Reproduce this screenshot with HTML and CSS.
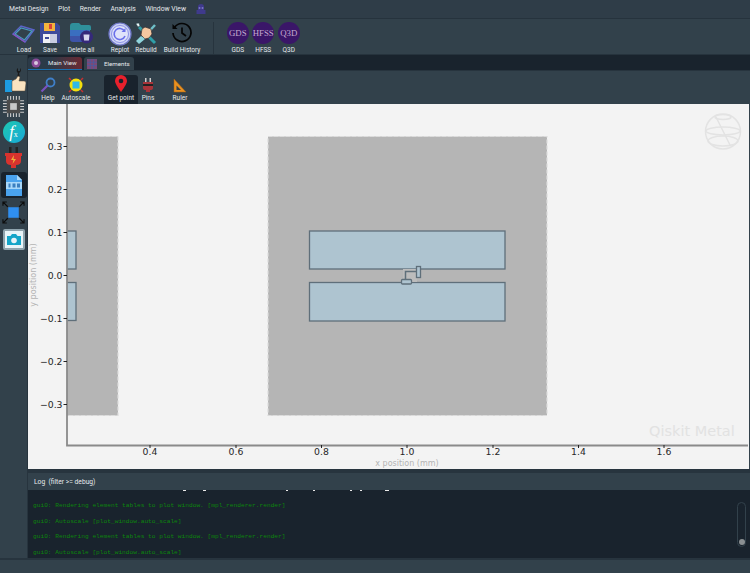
FILE: index.html
```html
<!DOCTYPE html>
<html lang="en">
<head>
<meta charset="utf-8">
<title>Qiskit Metal</title>
<link rel="stylesheet" href="styles.css">
</head>
<body>
<div class="app">
  <nav class="menubar">
    <span>Metal Design</span><span>Plot</span><span>Render</span><span>Analysis</span><span>Window View</span>
    <svg class="menu-icon" width="12" height="13" viewBox="0 0 12 13"><path d="M3 7V4a3 3 0 0 1 6 0v3h1.500v4H1.500V7z" fill="#3f3a8c"/><circle cx="4.500" cy="5" r="1" fill="#7a78c8"/><circle cx="7.500" cy="5" r="1" fill="#7a78c8"/></svg>
  </nav>

  <header class="toolbar">
    <div class="tool w-load">
      <svg class="load-icon" width="24" height="20" viewBox="0 0 24 20"><path d="M1 10 9 2l13 4-9 12z" fill="none" stroke="#5b64c8" stroke-width="1.400"/><path d="M3 10 9 4l11 3-7.500 9z" fill="none" stroke="#4a9ac0" stroke-width="1.200"/><path d="M1 10l12 8" stroke="#8a4fc0" stroke-width="1.400"/></svg>
      <span>Load</span>
    </div>
    <div class="tool w-save">
      <svg width="22" height="22" viewBox="0 0 22 22"><path d="M1 1h17l3 3v17H1z" fill="#3d4a9a"/><rect x="5" y="1" width="11" height="8" fill="#f4b43c"/><rect x="10" y="2" width="3" height="5" fill="#d9423a"/><rect x="4" y="12" width="14" height="9" fill="#f0f0f4"/><rect x="11" y="12" width="7" height="9" fill="#c8cce0"/><rect x="6" y="15" width="4" height="2" fill="#3d4a9a"/></svg>
      <span>Save</span>
    </div>
    <div class="tool w-delete">
      <svg width="25" height="22" viewBox="0 0 25 22"><path d="M1 4q0-3 3-3h6l2 2h8q2 0 2 2v3H1z" fill="#2f8f9a"/><path d="M1 8h20v6H1z" fill="#3a6fc0"/><path d="M1 14h15v6H4q-3 0-3-3z" fill="#3d54a8"/><circle cx="17.500" cy="15" r="6.500" fill="#35297a"/><path d="M14.500 12.500h6l-.6 6h-4.800z" fill="#d8d8ee"/></svg>
      <span>Delete all</span>
    </div>
    <div class="tool w-replot">
      <svg width="24" height="24" viewBox="0 0 24 24"><circle cx="12" cy="12" r="11" fill="#c9d0f4" stroke="#7078c8" stroke-width="1.200"/><circle cx="12" cy="12" r="8.500" fill="#dfe3fa" stroke="#8d92e6"/><path d="M16.500 9A5.600 5.600 0 1 0 17 14" fill="none" stroke="#6a70ea" stroke-width="1.600"/><path d="M17.500 6v4h-4z" fill="#6a70ea"/></svg>
      <span>Replot</span>
    </div>
    <div class="tool w-rebuild">
      <svg width="24" height="24" viewBox="0 0 24 24"><path d="M5 5l16 16" stroke="#2f9fa8" stroke-width="3"/><path d="M21 3 5 20" stroke="#6fbfc8" stroke-width="2.500"/><path d="M2 2l2 3 2-1-1-3q-3 0-3 1z" fill="#e8f4f6" stroke="#1a3a40" stroke-width=".5"/><path d="M8 7l3-2 6 2 1 5-3 4-4 1-4-4z" fill="#f5c7a0" stroke="#3a3030" stroke-width=".7"/><path d="M7 14l-5 5 3 3 6-5z" fill="#8fd4dc"/></svg>
      <span>Rebuild</span>
    </div>
    <div class="tool w-history">
      <svg width="22" height="22" viewBox="0 0 22 22"><path d="M3.500 5.500A9 9 0 1 1 2 11" fill="none" stroke="#050505" stroke-width="1.700"/><path d="M1.500 2v5h5z" fill="#050505"/><path d="M11 5.500V11l4 3" fill="none" stroke="#050505" stroke-width="1.700"/></svg>
      <span>Build History</span>
    </div>
    <div class="tool-sep"></div>
    <div class="tool w-round"><b class="badge">GDS</b><span>GDS</span></div>
    <div class="tool w-round"><b class="badge">HFSS</b><span>HFSS</span></div>
    <div class="tool w-round"><b class="badge">Q3D</b><span>Q3D</span></div>
  </header>

  <div class="body">
    <aside class="sidebar">
      <svg class="side-icon" width="24" height="25" viewBox="0 0 24 25"><path d="M16 1a3 3 0 0 0 0 5l-1 5h3l-1-5a3 3 0 0 0 1-5v3h-2z" fill="#1a1a1a"/><rect x="3" y="13" width="7" height="12" fill="#1d9be0"/><path d="M10 14l4-2 2-3 2 1-1 4h5q2 0 2 2l-1 8H10z" fill="#fbe3c0" stroke="#5a4a3a" stroke-width=".5"/></svg>
      <svg class="side-icon" width="23" height="23" viewBox="0 0 24 24"><g stroke="#c9c9c9" stroke-width="1.200"><path d="M6 1v22M9 1v22M12 1v22M15 1v22M18 1v22M1 6h22M1 9h22M1 12h22M1 15h22M1 18h22"/></g><rect x="5" y="5" width="14" height="14" fill="#4b4b4b"/><rect x="8.500" y="8.500" width="7" height="7" fill="#c8c8c8"/></svg>
      <div class="fx"><i>f</i><small>x</small></div>
      <svg class="side-icon plug" width="17" height="22" viewBox="0 0 17 22"><rect x="4" y="0" width="2.500" height="7" fill="#222"/><rect x="10.500" y="0" width="2.500" height="7" fill="#222"/><path d="M0 6h17v3h-1v5q0 4-5 4v3H6v-3q-5 0-5-4V9H0z" fill="#d8332e"/><path d="M9 8l-3 5h2.500L7.500 17l3.500-5H8.500z" fill="#f2b03a"/></svg>
      <div class="log-toggle">
        <svg width="18" height="23" viewBox="0 0 18 23"><path d="M1 1h11l5 5v16H1z" fill="#4aa3ee"/><path d="M12 1l5 5h-5z" fill="#a9d8fa"/><rect x="1" y="8" width="16" height="7" fill="#a9d8fa"/><rect x="3.500" y="9.500" width="2" height="4" fill="#3a7fc0"/><rect x="7.500" y="9.500" width="3" height="4" fill="#3a7fc0"/><rect x="12" y="9.500" width="3" height="4" fill="#3a7fc0"/></svg>
      </div>
      <svg class="side-icon" width="23" height="23" viewBox="0 0 24 24"><rect x="6.500" y="6.500" width="11" height="11" fill="#2f8ff0"/><g stroke="#0c0c0c" stroke-width="1.200" fill="none"><path d="M1 1l5 5M23 1l-5 5M1 23l5-5M23 23l-5-5M1 5V1h4M23 5V1h-4M1 19v4h4M23 19v4h-4"/></g></svg>
      <div class="camera">
        <svg width="16" height="13" viewBox="0 0 16 13"><path d="M1 3h3.500l1.500-2h4l1.500 2H15v9H1z" fill="#14a5c8"/><circle cx="8" cy="7.500" r="2.800" fill="#e8f4f8"/></svg>
      </div>
    </aside>

    <main class="main">
      <div class="tabs">
        <div class="tab tab-active">
          <svg width="10" height="10" viewBox="0 0 10 10"><circle cx="5" cy="5" r="4.500" fill="#8a4a98"/><circle cx="5" cy="5" r="2" fill="#d8c8e0"/></svg>
          <span>Main View</span>
        </div>
        <div class="tab">
          <svg width="10" height="10" viewBox="0 0 10 10"><rect width="10" height="10" fill="#7a4a78"/><path d="M0 3.300h10M0 6.600h10M3.300 0v10M6.600 0v10" stroke="#4a5aa0" stroke-width=".8"/></svg>
          <span>Elements</span>
        </div>
      </div>

      <div class="plotbar">
        <div class="ptool w-help">
          <svg width="16" height="16" viewBox="0 0 16 16"><circle cx="10.500" cy="5.500" r="4" fill="none" stroke="#3f7fc8" stroke-width="1.800"/><path d="M7.500 8.500 1.500 14.500" stroke="#7a50c0" stroke-width="2.200"/></svg>
          <span>Help</span>
        </div>
        <div class="ptool w-auto">
          <svg width="16" height="16" viewBox="0 0 16 16"><circle cx="8" cy="8" r="6.500" fill="#f4e00c"/><rect x="4.500" y="4.500" width="7" height="7" fill="#2fb8e8"/><path d="M1 1l2 2M15 1l-2 2M1 15l2-2M15 15l-2-2" stroke="#c83030" stroke-width="1.500"/></svg>
          <span>Autoscale</span>
        </div>
        <div class="ptool ptool-active">
          <svg width="12" height="18" viewBox="0 0 12 18"><path d="M6 17Q0 9 0 6a6 6 0 0 1 12 0q0 3-6 11z" fill="#e8202c"/><circle cx="6" cy="6" r="2.300" fill="#19232d"/></svg>
          <span>Get point</span>
        </div>
        <div class="ptool w-pins">
          <svg width="10" height="15" viewBox="0 0 10 15"><rect x="2" y="0" width="1.500" height="4" fill="#ccc"/><rect x="6.500" y="0" width="1.500" height="4" fill="#ccc"/><path d="M0 4h10v6q0 2-3 2v2H3v-2q-3 0-3-2z" fill="#a8343a"/><rect x="0" y="6" width="10" height="2" fill="#222"/></svg>
          <span>Pins</span>
        </div>
        <div class="ptool w-ruler">
          <svg width="14" height="15" viewBox="0 0 14 15"><path d="M1 1l12 13H1z" fill="#e89020" stroke="#a86010" stroke-width=".5"/><path d="M3.500 7.500l4.500 4.500h-4.500z" fill="#32414b"/></svg>
          <span>Ruler</span>
        </div>
      </div>

      <svg class="plot" viewBox="28 104 721 365" width="721" height="365">
        <rect x="28" y="104" width="721" height="365" fill="#f3f3f3"/>
        <rect class="chip" x="268" y="136.500" width="279" height="279"/>
        <rect class="chip" x="40" y="136.500" width="78" height="279"/>
        <rect class="pad" x="309.500" y="231" width="195.500" height="38"/>
        <rect class="pad" x="309.500" y="282.500" width="195.500" height="38.500"/>
        <rect class="pad" x="40" y="231" width="36" height="38"/>
        <rect class="pad" x="40" y="282.500" width="36" height="38"/>
        <rect x="403" y="269" width="14" height="13" fill="#bcbcbc"/>
        <rect class="pad" x="416.500" y="266.500" width="4" height="11"/>
        <path d="M416.500 271.500h-11v9" fill="none" stroke="#5f6f7a" stroke-width="1.500"/>
        <rect class="pad" x="401.500" y="279.500" width="10" height="4.500" rx="1"/>
        <rect x="28" y="104" width="39" height="345" fill="#f3f3f3"/>
        <g class="globe" fill="none" stroke="#e3e3e3" stroke-width="1.500">
          <circle cx="723" cy="131.500" r="17.500"/>
          <ellipse cx="723" cy="117" rx="8" ry="2.500"/>
          <ellipse cx="723" cy="131" rx="17" ry="4"/>
          <ellipse cx="723" cy="141" rx="15" ry="5"/>
          <path d="M716 117l14 28"/>
        </g>
        <text class="watermark" x="649" y="436">Qiskit Metal</text>
        <path class="spine" d="M67 104v341.500h681"/>
        <path class="ticks" d="M63.500 146.500H67M63.500 189.500H67M63.500 232.500H67M63.500 275.500H67M63.500 318.500H67M63.500 361.500H67M63.500 404.500H67M150 445v3M236 445v3M321.500 445v3M407 445v3M493 445v3M578.500 445v3M664 445v3"/>
        <g class="ylabels">
          <text x="62.500" y="150">0.3</text><text x="62.500" y="193">0.2</text><text x="62.500" y="236">0.1</text><text x="62.500" y="279">0.0</text>
          <text x="62.500" y="322">−0.1</text><text x="62.500" y="365">−0.2</text><text x="62.500" y="408">−0.3</text>
        </g>
        <g class="xlabels">
          <text x="150" y="455">0.4</text><text x="236" y="455">0.6</text><text x="321.500" y="455">0.8</text><text x="407" y="455">1.0</text>
          <text x="493" y="455">1.2</text><text x="578.500" y="455">1.4</text><text x="664" y="455">1.6</text>
        </g>
        <text class="axis-title" x="407" y="466">x position (mm)</text>
        <text class="axis-title" transform="translate(36 275) rotate(-90)">y position (mm)</text>
      </svg>

      <div class="splitter"></div>
      <div class="log-head">Log&nbsp; (filter &gt;= debug)</div>
      <section class="log">
        <svg class="log-clip" width="400" height="3" viewBox="0 0 400 3"><path d="M150 0h3v1h-3zM170 0h3v1h-3zM253 0h2v1h-2zM280 0h2v1h-2zM317 0h2v1h-2zM327 0h2v1h-2zM352 0h4v1h-4z" fill="#e8e8e8"/></svg>
        <p>gui0: Rendering element tables to plot window. [mpl_renderer.render]</p>
        <p>gui0: Autoscale [plot_window.auto_scale]</p>
        <p>gui0: Rendering element tables to plot window. [mpl_renderer.render]</p>
        <p>gui0: Autoscale [plot_window.auto_scale]</p>
        <div class="scroll"><div class="scroll-thumb"></div></div>
      </section>
    </main>
  </div>
  <footer class="status"></footer>
</div>
</body>
</html>
```

FILE: styles.css
```css
* { box-sizing: border-box; }
html, body { margin: 0; padding: 0; }
body { background: #32414b; font-family: Roboto, "Liberation Sans", sans-serif; color: #e6e9ec; overflow: hidden; }
svg { display: block; flex: none; }
.app { width: 750px; height: 573px; display: flex; flex-direction: column; overflow: hidden; }

.menubar { height: 19px; display: flex; align-items: center; gap: 9.500px; padding-left: 9px; font-size: 6.800px; background: #2f3d48; border-bottom: 1px solid #26333d; }
.menu-icon { margin-left: -1px; }

.toolbar { height: 36px; flex: none; display: flex; align-items: flex-start; background: #32414b; border-bottom: 1px solid #26333d; padding-top: 3px; }
.tool { display: flex; flex-direction: column; align-items: center; height: 32px; font-size: 6.500px; white-space: nowrap; }
.tool span { line-height: 8px; margin-top: auto; }
.load-icon { margin-top: 2px; }
.w-load { width: 24px; margin-left: 12px; }
.w-save { width: 22px; margin-left: 3px; }
.w-delete { width: 30px; margin-left: 5px; }
.w-replot { width: 28px; margin-left: 10px; }
.w-rebuild { width: 24px; margin-left: 0; }
.w-history { width: 40px; margin-left: 4px; }
.tool-sep { width: 1px; height: 32px; background: #27343e; margin-left: 11px; margin-right: 11px; }
.w-round { width: 25.500px; }
.badge { width: 22px; height: 22px; border-radius: 50%; background: #3a1668; color: #c4aad0; font: 400 8.800px/22px "Liberation Serif", serif; text-align: center; }

.body { flex: 1; display: flex; min-height: 0; }
.sidebar { width: 28px; flex: none; display: flex; flex-direction: column; align-items: center; padding-top: 12px; background: #32414b; border-right: 1px solid #27343e; }
.side-icon { margin-bottom: 3px; }
.plug { margin-top: 1px; }
.fx { width: 22px; height: 22px; margin-bottom: 3px; border-radius: 50%; background: linear-gradient(135deg, #1ec8b0, #18a8d8); color: #fff; font: italic 15px/22px "Liberation Serif", serif; text-align: center; }
.fx i { font-size: 17px; }
.fx small { font-size: 8px; font-style: normal; }
.log-toggle { width: 26px; height: 26px; display: flex; align-items: center; justify-content: center; margin-bottom: 3px; border-radius: 3px; background: #19232d; }
.camera { width: 22px; height: 21px; margin-top: 2px; display: flex; align-items: center; justify-content: center; border-radius: 2px; border: 2px solid #8fa3ad; background: #e8f4f8; }

.main { flex: 1; min-width: 0; display: flex; flex-direction: column; }
.tabs { height: 15px; flex: none; display: flex; align-items: flex-end; gap: 2px; background: #19232d; }
.tab { height: 13px; width: 50px; display: flex; align-items: center; gap: 7px; padding-left: 3px; font-size: 6.200px; border-radius: 3px 3px 0 0; background: #32414b; }
.tab-active { width: 54px; background: linear-gradient(90deg, #2b3a48 40%, #6a2a34); border-bottom: 1.500px solid #1a6fb0; }
.plotbar { height: 34px; flex: none; display: flex; align-items: flex-start; padding-top: 4px; background: #32414b; border-top: 1px solid #27343e; }
.ptool { height: 29px; display: flex; flex-direction: column; align-items: center; justify-content: flex-end; padding-bottom: 2px; font-size: 6.500px; white-space: nowrap; }
.ptool span { line-height: 8px; margin-top: 1px; }
.w-help { width: 18px; margin-left: 11px; }
.w-auto { width: 32px; margin-left: 3px; }
.ptool-active { width: 34px; margin-left: 12px; border-radius: 3px 3px 0 0; background: #19232d; }
.w-pins { width: 20px; margin-left: 0; }
.w-ruler { width: 22px; margin-left: 11px; }

.plot { background: #f3f3f3; }
.chip { fill: #b5b5b5; stroke: #dcdcdc; stroke-width: 1.200; stroke-dasharray: 4 2; }
.pad { fill: #aec4d0; stroke: #5f6f7a; stroke-width: 1.300; }
.spine { fill: none; stroke: #8a8a8a; stroke-width: 1.800; }
.ticks { fill: none; stroke: #222; stroke-width: 1; }
.ylabels text { font: 9.300px "DejaVu Sans", sans-serif; fill: #262626; text-anchor: end; }
.xlabels text { font: 9.300px "DejaVu Sans", sans-serif; fill: #262626; text-anchor: middle; }
.axis-title { font: 8px "DejaVu Sans", sans-serif; fill: #b4b4b4; text-anchor: middle; }
.watermark { font: 14.500px "DejaVu Sans", sans-serif; fill: #e2e2e2; }

.splitter { height: 4px; flex: none; background: #27343e; }
.log-head { height: 17px; flex: none; padding-left: 6px; font-size: 6.700px; line-height: 18px; background: #32414b; }
.log { position: relative; height: 68px; flex: none; padding-left: 5px; background: #19232d; font: 6.200px/15.500px "Liberation Mono", monospace; color: #0c860c; }
.log p { margin: 0; white-space: pre; }
.log-clip { height: 3px; margin-bottom: 5px; }
.scroll { position: absolute; left: 709px; top: 12px; width: 9px; height: 45px; border-radius: 5px; border: 1px solid #32414b; }
.scroll-thumb { position: absolute; left: 0.500px; bottom: 1px; width: 6px; height: 6px; border-radius: 50%; background: #8a8f92; }

.status { height: 15px; flex: none; background: #32414b; border-top: 2px solid #27343e; }
```
